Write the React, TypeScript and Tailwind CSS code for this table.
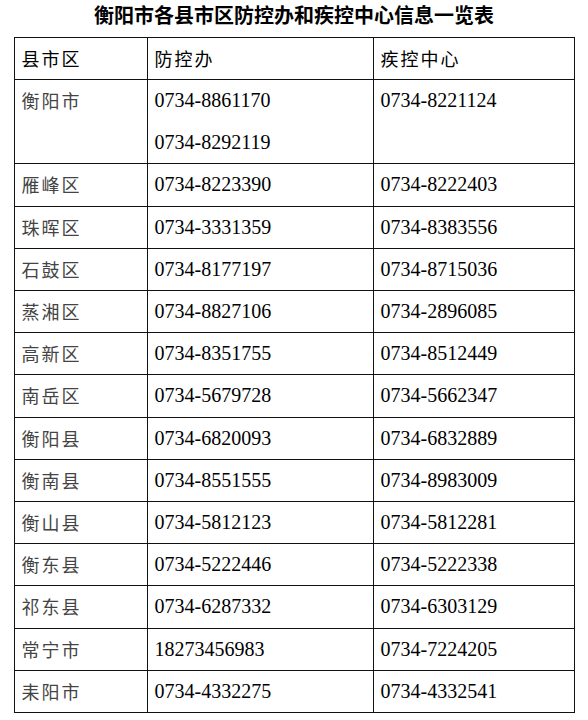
import React from 'react';

interface Row {
    area: string;
    office: string[];
    cdc: string;
}

const rows: Row[] = [
    { area: '衡阳市', office: ['0734-8861170', '0734-8292119'], cdc: '0734-8221124' },
    { area: '雁峰区', office: ['0734-8223390'], cdc: '0734-8222403' },
    { area: '珠晖区', office: ['0734-3331359'], cdc: '0734-8383556' },
    { area: '石鼓区', office: ['0734-8177197'], cdc: '0734-8715036' },
    { area: '蒸湘区', office: ['0734-8827106'], cdc: '0734-2896085' },
    { area: '高新区', office: ['0734-8351755'], cdc: '0734-8512449' },
    { area: '南岳区', office: ['0734-5679728'], cdc: '0734-5662347' },
    { area: '衡阳县', office: ['0734-6820093'], cdc: '0734-6832889' },
    { area: '衡南县', office: ['0734-8551555'], cdc: '0734-8983009' },
    { area: '衡山县', office: ['0734-5812123'], cdc: '0734-5812281' },
    { area: '衡东县', office: ['0734-5222446'], cdc: '0734-5222338' },
    { area: '祁东县', office: ['0734-6287332'], cdc: '0734-6303129' },
    { area: '常宁市', office: ['18273456983'], cdc: '0734-7224205' },
    { area: '耒阳市', office: ['0734-4332275'], cdc: '0734-4332541' },
];

const cell = 'border-[1.5px] border-[#111] align-top pl-[7px] pr-2 py-0 leading-[41.2px]';
const cjk = "font-['Noto_Sans_CJK_SC',sans-serif]";
const num = "font-['Liberation_Serif','Noto_Sans_CJK_SC',serif] text-[20px] text-black";

const App: React.FC = () => {
    return (
        <div className="w-[588px] h-[720px] bg-white">
            <h1 className={`${cjk} text-center text-[20px] font-bold leading-[30px] text-black`}>
                衡阳市各县市区防控办和疾控中心信息一览表
            </h1>
            <table className="mx-auto mt-[7px] w-[560px] border-collapse table-fixed">
                <colgroup>
                    <col className="w-[133px]" />
                    <col className="w-[226px]" />
                    <col className="w-[201px]" />
                </colgroup>
                <thead>
                    <tr>
                        <th className={`${cell} ${cjk} text-left font-normal text-[18px] tracking-[2px] text-black`}>县市区</th>
                        <th className={`${cell} ${cjk} text-left font-normal text-[18px] tracking-[2px] text-black`}>防控办</th>
                        <th className={`${cell} ${cjk} text-left font-normal text-[18px] tracking-[2px] text-black`}>疾控中心</th>
                    </tr>
                </thead>
                <tbody>
                    {rows.map((row) => (
                        <tr key={row.area}>
                            <td className={`${cell} ${cjk} text-[18px] tracking-[2px] text-[#444]`}>{row.area}</td>
                            <td className={`${cell} ${num}`}>
                                {row.office.map((phone, i) => (
                                    <div key={phone} className={i > 0 ? 'leading-[42px]' : ''}>{phone}</div>
                                ))}
                            </td>
                            <td className={`${cell} ${num}`}>{row.cdc}</td>
                        </tr>
                    ))}
                </tbody>
            </table>
        </div>
    );
};

export default App;
